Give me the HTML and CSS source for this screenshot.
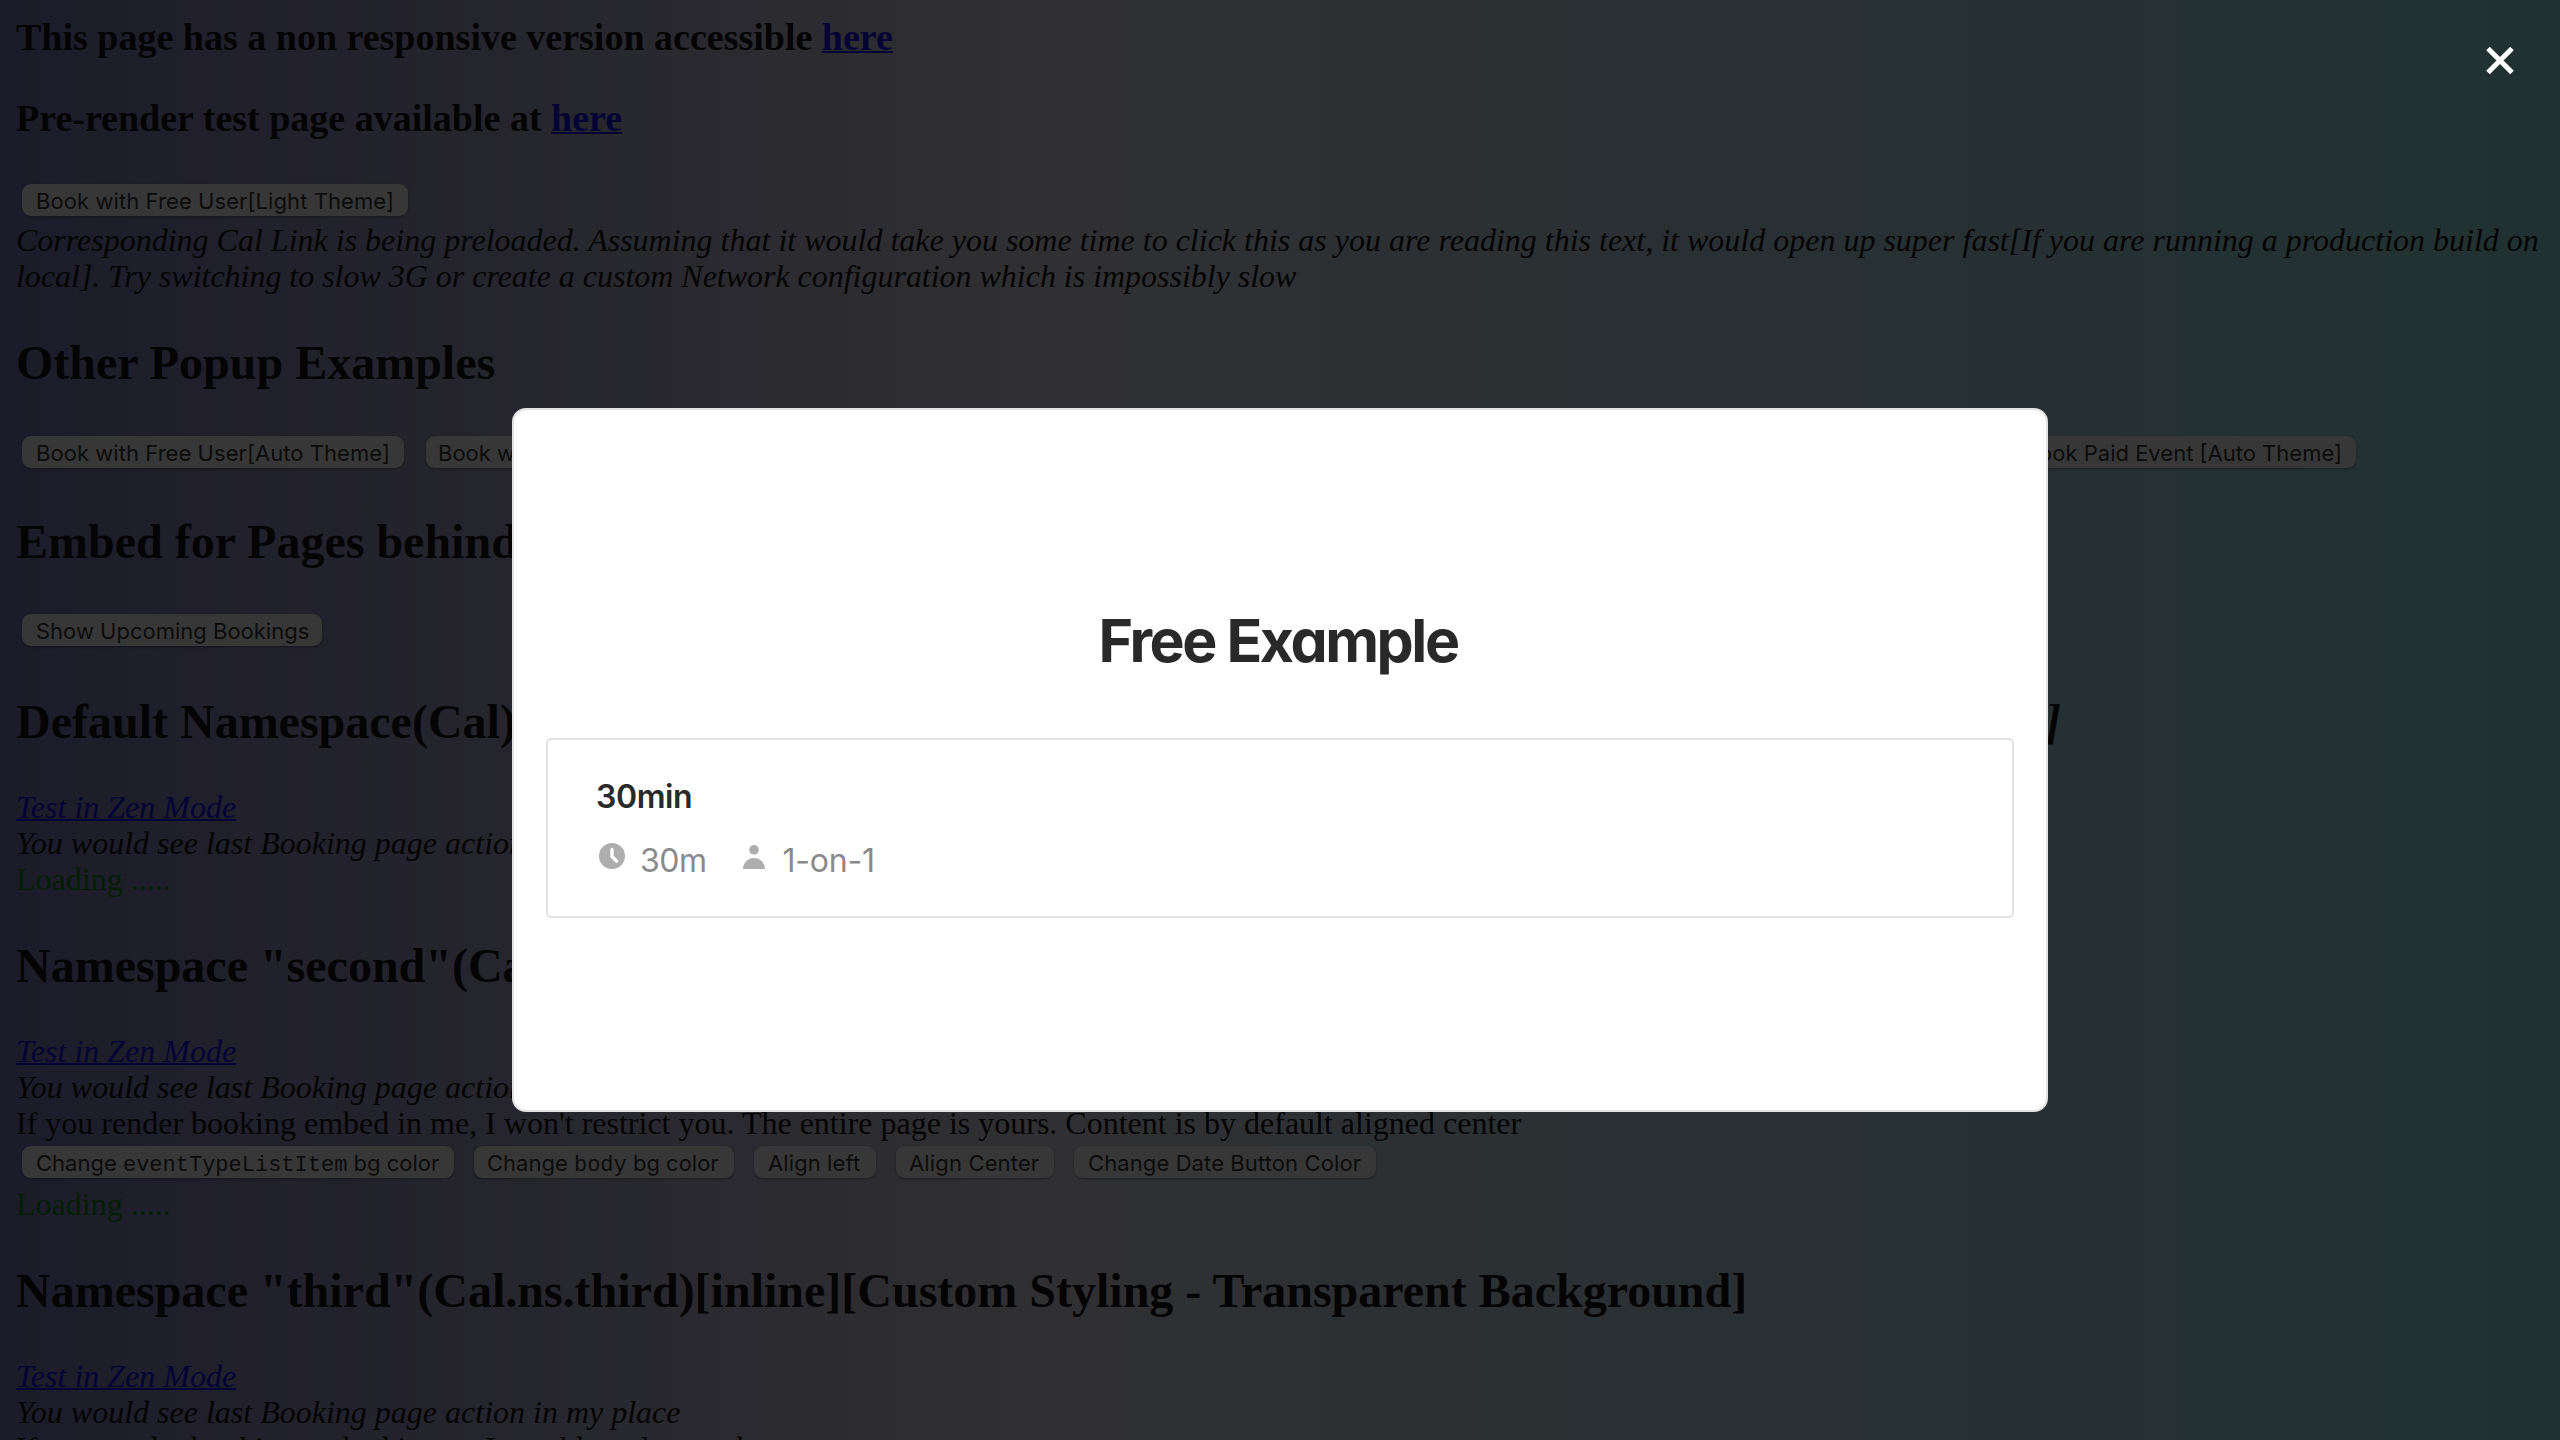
FILE: index.html
```html
<!DOCTYPE html>
<html lang="en">
<head>
<meta charset="utf-8">
<title>Embed Playground</title>
<link rel="stylesheet" href="styles.css">
</head>
<body>
<main class="page">
  <h3 class="note">This page has a non responsive version accessible <a class="link" href="#">here</a></h3>
  <h3 class="note">Pre-render test page available at <a class="link" href="#">here</a></h3>
  <div class="row"><button class="btn b-light">Book with Free User[Light Theme]</button></div>
  <p class="line em">Corresponding Cal Link is being preloaded. Assuming that it would take you some time to click this as you are reading this text, it would open up super fast[If you are running a production build on<br><span class="tight">local]. Try switching to slow 3G or create a custom Network configuration which is impossibly slow</span></p>

  <h2 class="title">Other Popup Examples</h2>
  <div class="row popups">
    <button class="btn b-auto">Book with Free User[Auto Theme]</button>
    <button class="btn b-dark">Book with Free User[Dark Theme]</button>
    <button class="btn b-paid">Book Paid Event [Auto Theme]</button>
  </div>

  <h2 class="title">Embed for Pages behind authentication</h2>
  <div class="row upcoming"><button class="btn b-show">Show Upcoming Bookings</button></div>

  <h2 class="title default"><span>Default Namespace(Cal)</span><i>[Dark Theme][inline]</i></h2>
  <p class="line em"><a class="link" href="#">Test in Zen Mode</a></p>
  <p class="line em">You would see last Booking page action in my place</p>
  <p class="line loading">Loading .....</p>

  <h2 class="title">Namespace "second"(Cal.ns.second)[inline]</h2>
  <p class="line em"><a class="link" href="#">Test in Zen Mode</a></p>
  <p class="line em">You would see last Booking page action in my place</p>
  <p class="line">If you render booking embed in me, I won't restrict you. The entire page is yours. Content is by default aligned center</p>
  <div class="row tools">
    <button class="btn b-item">Change <code class="code">eventTypeListItem</code> bg color</button>
    <button class="btn b-body">Change <code class="code">body</code> bg color</button>
    <button class="btn b-left">Align left</button>
    <button class="btn b-center">Align Center</button>
    <button class="btn b-date">Change Date Button Color</button>
  </div>
  <p class="line loading">Loading .....</p>

  <h2 class="title third">Namespace "third"(Cal.ns.third)[inline][Custom Styling - Transparent Background]</h2>
  <p class="line em"><a class="link" href="#">Test in Zen Mode</a></p>
  <p class="line em">You would see last Booking page action in my place</p>
  <p class="line">If you render booking embed in me, I would not let you be more</p>
</main>

<div class="overlay">
  <svg class="close" viewBox="0 0 30 30"><path d="M3 3 27 27M27 3 3 27"/></svg>
  <section class="modal">
    <h1 class="name">Free Example</h1>
    <div class="card">
      <div class="event">30min</div>
      <div class="meta">
        <svg class="icon clock" viewBox="0 0 26 26"><circle cx="13" cy="13" r="13"/><path d="M13 6.5v7l4.6 4.6"/></svg>
        <span class="dur">30m</span>
        <svg class="icon user" viewBox="0 0 22 24"><circle cx="11" cy="4.8" r="4.8"/><path d="M0 24a11 11 0 0 1 22 0z"/></svg>
        <span class="kind">1-on-1</span>
      </div>
    </div>
  </section>
</div>
</body>
</html>
```
FILE: styles.css
```css
* { box-sizing: border-box; }
body {
  margin: 0;
  height: 1440px;
  overflow: hidden;
  font: 32px/36px "Liberation Serif", serif;
  color: #000;
  background: linear-gradient(90deg, #7874ba 0%, #dddde6 41%, #bcdaec 64%, #90e0e6 100%);
}
.page { padding: 16px; height: 1440px; overflow: hidden; white-space: nowrap; }
.note { margin: 0 0 38px; font-size: 38px; line-height: 43px; }
.title { margin: 40.84px 0 38.84px; font-size: 48px; line-height: 56px; }
.default { display: flex; justify-content: space-between; width: 2045px; }
.third { margin-top: 41.84px; }
.line { margin: 0; }
.em { font-style: italic; }
.tight { letter-spacing: -.02px; }
.link { color: #0000ee; text-decoration-thickness: 2px; }
.loading { color: green; }
.row { display: flex; gap: 20px; height: 44px; padding: 6px; }
.btn {
  height: 32px;
  padding: 0 14px;
  border: 0;
  border-radius: 9px;
  background: #fff;
  box-shadow: 0 1px 3px rgba(0, 0, 0, .4);
  font: 22px/34px Inter, sans-serif;
  color: #2a2a2a;
  white-space: pre;
  flex: none;
  text-align: left;
}
.code { font: 22px "Liberation Mono", monospace; }
.popups { gap: 22px; padding-right: 188px; }
.b-light { width: 386px; letter-spacing: .08px; }
.b-auto { width: 382px; letter-spacing: .05px; }
.b-dark { padding-left: 12px; }
.b-show { width: 300px; line-height: 35px; }
.b-paid { margin-left: auto; }
.b-item { width: 432px; }
.b-body { width: 260px; padding-left: 13px; }
.b-left { width: 122px; letter-spacing: .1px; }
.b-center { width: 158px; padding-left: 13px; letter-spacing: .15px; }
.b-date { width: 302px; letter-spacing: .1px; }
.upcoming { padding-top: 5px; }
.tools { height: 45px; padding-top: 5px; }

.overlay {
  position: fixed;
  inset: 0;
  display: flex;
  align-items: center;
  justify-content: center;
  padding-top: 80px;
  background: rgba(5, 5, 5, .8);
}
.close {
  position: absolute;
  top: 45px;
  right: 45px;
  width: 30px;
  height: 31px;
  stroke: #fff;
  stroke-width: 5;
}
.modal {
  width: 1536px;
  height: 704px;
  padding: 195px 32px 0;
  border: 2px solid #e1e1e1;
  border-radius: 14px;
  background: #fff;
  font-family: Inter, sans-serif;
}
.name {
  margin: 0 0 61px;
  padding-right: 4px;
  text-align: center;
  font-size: 59px;
  font-weight: 700;
  line-height: 72px;
  letter-spacing: -2.45px;
  font-feature-settings: "cv11";
  color: #292929;
}
.card {
  height: 180px;
  padding: 37px 48px;
  border: 2px solid #e1e1e1;
  border-radius: 5px;
}
.event { font-size: 32px; font-weight: 600; line-height: 40px; letter-spacing: -.4px; color: #292929; }
.meta { display: flex; align-items: center; margin-top: 24px; line-height: 40px; color: #8a8a8a; }
.icon { fill: #adadad; }
.clock { width: 26px; height: 26px; margin: 0 15px 10px 3px; }
.clock path { fill: none; stroke: #fff; stroke-width: 3.4; stroke-linecap: round; }
.dur { letter-spacing: -.5px; }
.user { width: 22px; height: 24px; margin: 0 17px 8px 37px; }
.kind { letter-spacing: -.2px; }
```
